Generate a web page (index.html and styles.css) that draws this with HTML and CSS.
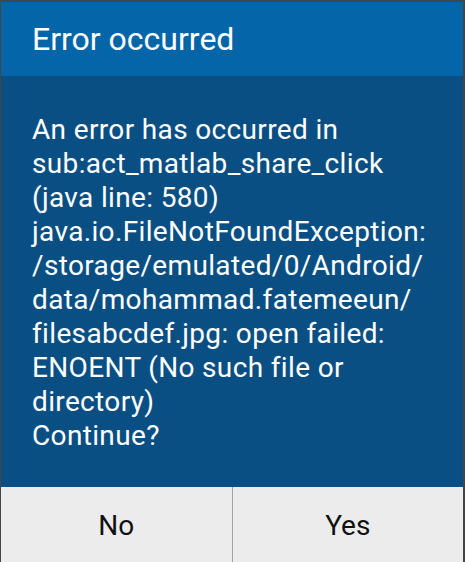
FILE: index.html
```html
<!DOCTYPE html>
<html>
<head>
<meta charset="utf-8">
<link rel="stylesheet" href="styles.css">
</head>
<body>
<div class="dialog">
  <div class="title">Error occurred</div>
  <div class="message">An error has occurred in<br>sub:act_matlab_share_click<br>(java line: 580)<br>java.io.FileNotFoundException:<br>/storage/emulated/0/Android/<br>data/mohammad.fatemeeun/<br>filesabcdef.jpg: open failed:<br>ENOENT (No such file or<br>directory)<br>Continue?</div>
  <div class="buttons">
    <div class="btn">No</div>
    <div class="btn">Yes</div>
  </div>
</div>
</body>
</html>
```
FILE: styles.css
```css
html, body {
  margin: 0;
  padding: 0;
  background: #454545;
  height: 562px;
  overflow: hidden;
}
.dialog {
  margin: 2px 2px 0 1px;
  font-family: Roboto, "Noto Sans", sans-serif;
  display: flex;
  flex-direction: column;
}
.title {
  background: #0565a9;
  color: #ffffff;
  font-size: 32px;
  line-height: 40px;
  padding: 17px 0 17px 31px;
}
.message {
  background: #0a4f83;
  color: #ffffff;
  font-size: 28px;
  letter-spacing: 0.35px;
  line-height: 34px;
  padding: 37px 0 34px 31px;
}
.buttons {
  display: flex;
  background: #ececec;
  height: 80px;
}
.btn {
  flex: 1;
  text-align: center;
  color: #111111;
  font-size: 28px;
  padding-top: 22px;
  line-height: 34px;
}
.btn + .btn {
  border-left: 1px solid #a3a3a3;
}
```
